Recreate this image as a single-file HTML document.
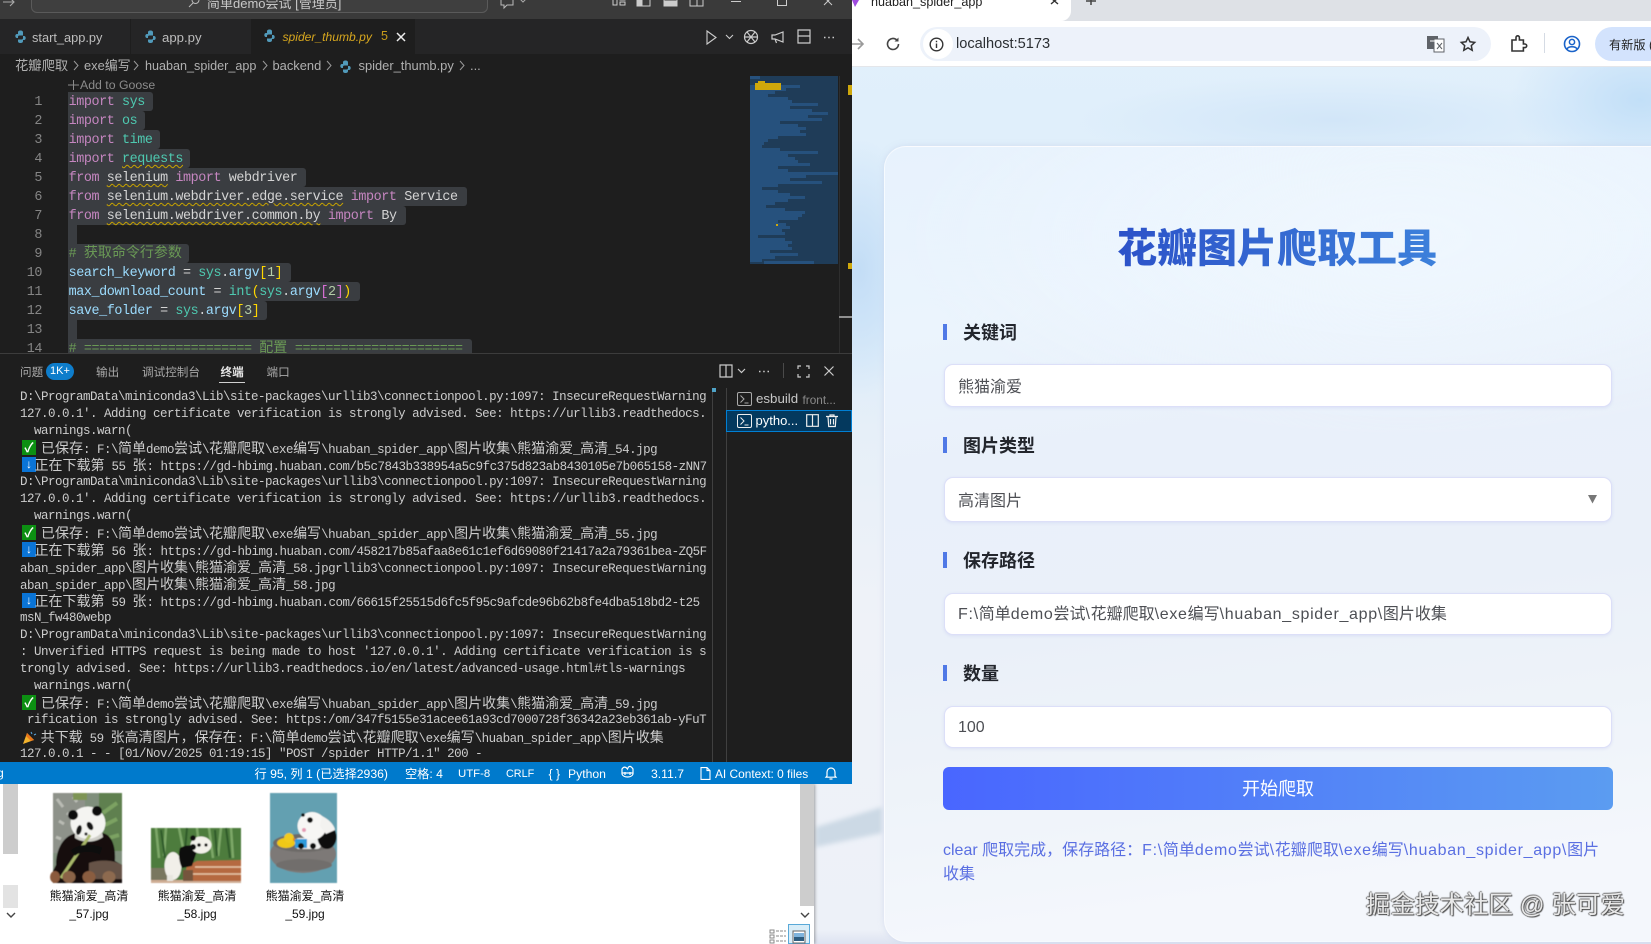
<!DOCTYPE html>
<html lang="zh"><head><meta charset="utf-8"><title>huaban_spider_app</title>
<style>
html,body{margin:0;padding:0;width:1651px;height:944px;overflow:hidden;background:#dce9f5}
*{box-sizing:border-box}
body{position:relative;font-family:"Liberation Sans","Noto Sans CJK SC",sans-serif}
.a{position:absolute}
.t{position:absolute;white-space:pre}
svg{position:absolute;overflow:visible}
/* page */
#page{left:814px;top:0;width:837px;height:944px;overflow:hidden;
background:
radial-gradient(60px 130px at 46px 270px,#c3ddf6 0,rgba(195,221,246,0) 100%),
radial-gradient(130px 80px at 826px 100px,#c2dff8 0,rgba(194,223,248,0) 100%),
radial-gradient(260px 45px at 520px 120px,#d2e6f8 0,rgba(210,230,248,0) 100%),
linear-gradient(180deg,#e2f0fb 0,#e0effb 120px,#dcedfb 320px,#e6eff8 430px,#eff2f8 620px,#edf1f8 930px,#dde3f1 944px)}
#card{left:884px;top:146px;width:780px;height:796px;border-radius:22px 0 0 22px;border:1px solid rgba(255,255,255,.55);
background:
radial-gradient(500px 200px at 520px 90px,#eff7fe 0,rgba(239,247,254,0) 100%),
linear-gradient(172deg,#e7f2fd 0,#ebf4fd 180px,#e9f0fa 330px,#eaf0f9 500px,#eef3f9 640px,#f4f7fc 796px);
box-shadow:0 0 6px rgba(195,205,232,.55)}
#title{left:1077px;top:223px;width:400px;text-align:center;font-size:40px;line-height:52px;font-weight:900;
background:linear-gradient(90deg,#2a4cc6,#3f86dd);-webkit-background-clip:text;background-clip:text;color:transparent}
.bar{position:absolute;left:943px;width:4px;height:16px;background:#5079e6}
.lab{position:absolute;left:963px;font-size:18px;line-height:24px;font-weight:700;color:#23262d;margin-top:.5px}
.inp{position:absolute;left:944px;width:668px;background:#fff;border-radius:9px;border:1px solid #dcdff8;box-shadow:0 1px 3px rgba(120,130,220,.15)}
.val{position:absolute;left:958px;font-size:16px;line-height:24px;color:#4d4f54;white-space:pre;margin-top:1px}
.val b,.st b{font-weight:400;letter-spacing:.68px}
#btn{left:943px;top:767px;width:670px;height:43px;border-radius:6px;background:linear-gradient(90deg,#4966ff,#5b9cf1);color:#fff;font-size:18px;line-height:45px;text-align:center}
.st{position:absolute;left:943px;font-size:16px;line-height:24px;color:#5a6fe2;white-space:pre}
#wm{left:1366px;top:890px;font-size:24.5px;line-height:32px;color:#e8e8e8;white-space:pre;
text-shadow:1px 1px 1px #444,-1px 0 1px #666,0 -1px 1px #777}
/* browser */
#strip{left:852px;top:0;width:799px;height:21px;background:#dee1e6}
#btab{left:852px;top:0;width:219px;height:21px;background:#fff;border-radius:0 0 10px 0}
#tb{left:852px;top:21px;width:799px;height:46px;background:#fff;border-bottom:1px solid #e4e6ea}
#omni{left:920px;top:27px;width:571px;height:34px;border-radius:17px;background:#edf2fa}
/* vscode */
#vs{left:0;top:0;width:852px;height:784px;background:#1e1e1e;overflow:hidden}
#tbar{left:0;top:0;width:852px;height:19px;background:#3a3a3a}
#tabs{left:0;top:19px;width:852px;height:35px;background:#252526}
.ui{font-size:13.2px;line-height:18px;color:#bdbdbd}
.bc{position:absolute;white-space:pre;top:57px;font-size:12.9px;line-height:18px;color:#b0b0b0}
.ed{position:absolute;left:68.6px;height:19px;line-height:19px;margin-top:1px;font-family:"Liberation Mono","Noto Sans CJK SC",monospace;font-size:13.4px;letter-spacing:-.41px;white-space:pre;color:#d4d4d4}
.ed i{font-style:normal;font-size:14px;letter-spacing:0}
.sel{position:absolute;left:68px;height:19px;background:#3a3d41;border-radius:0 3px 3px 0}
.n{position:absolute;left:14px;width:28px;text-align:right;height:19px;line-height:19px;margin-top:1px;font-family:"Liberation Mono",monospace;font-size:13.4px;letter-spacing:-.41px;color:#858585}
.k{color:#c586c0}.g{color:#4ec9b0}.b{color:#9cdcfe}.y{color:#ffd700}.p{color:#da70d6}.m{color:#b5cea8}.c{color:#6a9955}
.w{text-decoration:underline wavy #c9a400 1px;text-underline-offset:2px}
.l{position:absolute;left:20px;height:17px;line-height:17px;margin-top:1px;font-family:"Liberation Mono","Noto Sans CJK SC",monospace;font-size:12.5px;letter-spacing:-.5px;color:#cccccc;white-space:pre}
.l i{font-style:normal;font-size:14px;letter-spacing:0;font-family:"Noto Sans CJK SC",sans-serif}
.ok{position:absolute;left:22px;width:14px;height:15px;background:#0c8f12;color:#fff;font-size:13px;line-height:15px;text-align:center;font-weight:700}
.dn{position:absolute;left:22px;width:14px;height:15px;background:#0a74d6;color:#fff;font-size:12px;line-height:15px;text-align:center;font-weight:700}
.pt{position:absolute;font-size:11.6px;line-height:16px;color:#a9a9a9;white-space:pre}
.s{position:absolute;top:764.5px;font-size:12.2px;line-height:18px;color:#fff;white-space:pre}
.fl{position:absolute;font-size:12px;line-height:18px;color:#111;white-space:pre;text-align:center;width:100px}
</style></head><body>

<!-- browser page -->
<div class="a" id="page"></div>
<svg style="left:814px;top:790px" width="72" height="70"><defs><filter id="st"><feGaussianBlur stdDeviation="2.5"/></filter></defs><path d="M2 37L68 17V43L2 57z" fill="#ccd9e5" filter="url(#st)"/></svg>
<div class="a" id="card"></div>
<div class="a" id="title">花瓣图片爬取工具</div>

<div class="bar" style="top:324px"></div><div class="lab" style="top:320px">关键词</div>
<div class="inp" style="top:364px;height:43px"></div><div class="val" style="top:375px">熊猫渝爱</div>

<div class="bar" style="top:437px"></div><div class="lab" style="top:433px">图片类型</div>
<div class="inp" style="top:477px;height:45px"></div><div class="val" style="top:489px">高清图片</div>
<svg style="left:1588px;top:495px" width="10" height="9"><path d="M0 0h9L4.500 8.500z" fill="#777"/></svg>

<div class="bar" style="top:552px"></div><div class="lab" style="top:548px">保存路径</div>
<div class="inp" style="top:593px;height:42px"></div><div class="val" style="top:602px"><b>F:\</b>简单<b>demo</b>尝试<b>\</b>花瓣爬取<b>\exe</b>编写<b>\huaban_spider_app\</b>图片收集</div>

<div class="bar" style="top:665px"></div><div class="lab" style="top:661px">数量</div>
<div class="inp" style="top:706px;height:42px"></div><div class="val" style="top:715px">100</div>

<div class="a" id="btn">开始爬取</div>
<div class="st" style="top:839px">clear 爬取完成，保存路径：<b>F:\</b>简单<b>demo</b>尝试<b>\</b>花瓣爬取<b>\exe</b>编写<b>\huaban_spider_app\</b>图片</div>
<div class="st" style="top:863px">收集</div>
<div class="a" id="wm">掘金技术社区 @ 张可爱</div>

<!-- browser chrome -->
<div class="a" id="strip"></div>
<div class="a" id="btab"></div>
<div class="t" style="left:871px;top:-7px;font-size:12.6px;line-height:18px;color:#222">huaban_spider_app</div>
<svg style="left:852px;top:0" width="8" height="8"><path d="M0 0h7L3 7z" fill="#a04be0"/></svg>
<svg style="left:1050px;top:-2px" width="10" height="8"><path d="M1 0l7 6M8 0L1 6" stroke="#333" stroke-width="1.400" fill="none"/></svg>
<svg style="left:1085px;top:-2px" width="12" height="10"><path d="M6 0v7M1 3h10" stroke="#444" stroke-width="1.500"/></svg>
<div class="a" id="tb"></div>
<div class="a" id="omni"></div>
<div class="a" style="left:923px;top:29px;width:30px;height:30px;border-radius:15px;background:#fff"></div>
<svg style="left:850px;top:36px" width="16" height="16"><path d="M2 8h11M8 3l5 5-5 5" stroke="#9a9a9a" stroke-width="1.600" fill="none"/></svg>
<svg style="left:885px;top:36px" width="16" height="16"><path d="M13.500 8A5.500 5.500 0 1 1 11.800 4" stroke="#444" stroke-width="1.600" fill="none"/><path d="M13.500 1.500v4h-4z" fill="#444"/></svg>
<svg style="left:929px;top:37px" width="15" height="15"><circle cx="7.500" cy="7.500" r="6.300" stroke="#333" stroke-width="1.400" fill="none"/><path d="M7.500 6.500v4.500M7.500 3.800v1.400" stroke="#333" stroke-width="1.400"/></svg>
<div class="t" style="left:956px;top:35px;font-size:14.600px;line-height:18px;color:#2b2f33">localhost:5173</div>
<svg style="left:1427px;top:35px" width="18" height="18"><rect x="0" y="1" width="11" height="13" fill="#5f6368"/><rect x="7" y="4" width="10" height="13" fill="#fff" stroke="#5f6368"/><path d="M3 6h5" stroke="#fff"/><path d="M10 8l5 6M15 8l-5 6" stroke="#5f6368"/></svg>
<svg style="left:1460px;top:36px" width="16" height="16"><path d="M8 1.500l2 4.300 4.700.6-3.400 3.200.9 4.700L8 11.900l-4.200 2.400.9-4.700L1.300 6.400 6 5.800z" stroke="#333" stroke-width="1.500" fill="none"/></svg>
<svg style="left:1510px;top:35px" width="17" height="18"><path d="M2 5h4V2.500a1.700 1.700 0 0 1 3.400 0V5h4v4h1.500a1.800 1.800 0 0 1 0 3.600H13.400V16H2z" stroke="#333" stroke-width="1.600" fill="none"/></svg>
<div class="a" style="left:1544px;top:33px;width:1px;height:20px;background:#d5dbe4"></div>
<svg style="left:1563px;top:35px" width="18" height="18"><circle cx="9" cy="9" r="7.500" stroke="#1a63c9" stroke-width="1.600" fill="none"/><circle cx="9" cy="7" r="2.600" stroke="#1a63c9" stroke-width="1.500" fill="none"/><path d="M4 14c1.500-3 8.500-3 10 0" stroke="#1a63c9" stroke-width="1.500" fill="none"/></svg>
<div class="a" style="left:1595px;top:27px;width:80px;height:34px;border-radius:17px;background:#d3e3fd"></div>
<div class="t" style="left:1609px;top:36px;font-size:12.200px;line-height:18px;color:#222">有新版 (</div>

<!-- explorer -->
<div class="a" style="left:0;top:784px;width:814px;height:160px;background:#fff;box-shadow:1px 0 3px rgba(90,90,90,.55)"></div>
<div class="a" style="left:3px;top:784px;width:15px;height:70px;background:#cdcdcd"></div>
<div class="a" style="left:3px;top:885px;width:15px;height:23px;background:#e3e3e3"></div>
<svg style="left:6px;top:912px" width="10" height="7"><path d="M1 1l4 4 4-4" stroke="#444" stroke-width="1.400" fill="none"/></svg>
<div class="a" style="left:800px;top:784px;width:13.500px;height:122px;background:#cdcdcd"></div>
<svg style="left:800px;top:912px" width="10" height="7"><path d="M1 1l4 4 4-4" stroke="#444" stroke-width="1.400" fill="none"/></svg>

<svg style="left:53px;top:793px" width="69" height="90" viewBox="0 0 69 90">
<defs><filter id="bl"><feGaussianBlur stdDeviation=".5"/></filter></defs>
<g filter="url(#bl)"><rect width="69" height="90" fill="#7f8f7c"/><rect width="32" height="60" fill="#8e928a"/><path d="M4 6l6 8M14 20l5 4M6 28l5 3M20 4l4 5M3 44l5 2" stroke="#b9bbb4" stroke-width="3"/><rect x="46" width="23" height="58" fill="#5f8050"/><path d="M50 20l14-10M52 32l12-6M56 45l10-3" stroke="#7ba262" stroke-width="4"/><rect x="20" width="14" height="7" fill="#7d9455"/>
<path d="M3 72C3 52 14 40 26 40h22c10 0 15 12 14 28l7 4v18H0V78z" fill="#14110e"/>
<path d="M36 70c8-3 24-4 33 2v14H36z" fill="#665347"/>
<ellipse cx="35" cy="30" rx="17.500" ry="16.500" fill="#f4f4f1"/><path d="M22 40c6 8 20 8 27-1l1 5c-8 6-20 6-28 1z" fill="#cfcfc9"/>
<circle cx="20" cy="22" r="5" fill="#0f0f0f"/><circle cx="44" cy="18" r="5" fill="#0f0f0f"/><ellipse cx="26" cy="37" rx="2.600" ry="5" fill="#161616" transform="rotate(15 26 37)"/><ellipse cx="37" cy="33" rx="2.800" ry="4.500" fill="#161616" transform="rotate(-30 37 33)"/><circle cx="33" cy="41" r="1.600" fill="#333"/>
<path d="M8 85L37 42" stroke="#a9b86a" stroke-width="3"/><path d="M20 60c8-6 18-6 28-2" stroke="#0a0a0a" stroke-width="7" fill="none"/>
<ellipse cx="2" cy="84" rx="5" ry="6" fill="#8b5a3e"/><ellipse cx="16" cy="84" rx="6.500" ry="6" fill="#8a6347"/><ellipse cx="36" cy="84" rx="6.500" ry="6" fill="#8a5d40"/><ellipse cx="56" cy="84" rx="6.500" ry="6" fill="#8d6a4f"/></g></svg>

<svg style="left:151px;top:828px" width="90" height="55" viewBox="0 0 90 55">
<g filter="url(#bl)"><rect width="90" height="55" fill="#4d7c3e"/><path d="M5 0l3 30M15 0l-2 28M28 0l4 20M58 0l4 30M70 0l-3 28M80 0l2 30M46 0l2 18" stroke="#7da867" stroke-width="2.500"/><path d="M10 2l4 28M36 0l-2 22M64 2l2 26M75 0l4 30" stroke="#2f5a2b" stroke-width="2"/>
<rect x="0" y="40" width="20" height="13" fill="#79775f"/><rect x="0" y="52" width="90" height="3" fill="#cfae95"/>
<path d="M36 38l10-5 44-1v21H32z" fill="#b5693f"/><path d="M44 39h46M42 46h48" stroke="#e6c6a8" stroke-width="1.500"/><rect x="32" y="42" width="10" height="11" fill="#74543e"/>
<ellipse cx="22" cy="38" rx="8.500" ry="14" fill="#f1efe9"/><path d="M29 20c6-4 14-3 18 0l-6 18-10 2c-3-6-4-14-2-20z" fill="#0f0f0f"/><rect x="16" y="47" width="6" height="6" fill="#e8e6df"/>
<ellipse cx="50" cy="17" rx="10.500" ry="8.500" fill="#f3f1ea"/><circle cx="42" cy="19" r="3" fill="#0f0f0f"/><circle cx="42" cy="10" r="2.800" fill="#111"/><circle cx="48" cy="17" r="1.800" fill="#111"/><circle cx="55" cy="17" r="1.600" fill="#111"/></g></svg>

<svg style="left:270px;top:793px" width="67" height="90" viewBox="0 0 67 90">
<g filter="url(#bl)"><rect width="67" height="90" fill="#64a0b1"/>
<ellipse cx="33" cy="61" rx="33" ry="19" fill="#7d7977"/><ellipse cx="33" cy="50" rx="30" ry="9" fill="#6d6a68"/><ellipse cx="34" cy="72" rx="28" ry="6" fill="#716e6c" />
<rect x="25" y="45" width="26" height="11" rx="4" fill="#f0f0ee"/><path d="M25 46h12v9H25z" fill="#2f9bdc"/>
<ellipse cx="57" cy="44" rx="9.500" ry="12" fill="#0c0c0c"/>
<ellipse cx="42" cy="33" rx="14.500" ry="14" fill="#f7f6f4"/><path d="M52 23c6 3 12 8 13 14l-9 4-6-8z" fill="#f3f2f0"/>
<circle cx="40" cy="27" r="2.800" fill="#111"/><circle cx="33" cy="22" r="1.800" fill="#111"/><circle cx="34" cy="37" r="2" fill="#e69ab4"/>
<circle cx="31" cy="53" r="3" fill="#111"/><circle cx="43" cy="53" r="3" fill="#111"/>
<ellipse cx="16" cy="50" rx="9" ry="5" fill="#f0c818"/><circle cx="19" cy="45" r="5" fill="#f2cb1d"/><path d="M23 45l3 1-3 2z" fill="#e88a1a"/></g></svg>

<div class="fl" style="left:39px;top:887px">熊猫渝爱_高清</div><div class="fl" style="left:39px;top:905px">_57.jpg</div>
<div class="fl" style="left:147px;top:887px">熊猫渝爱_高清</div><div class="fl" style="left:147px;top:905px">_58.jpg</div>
<div class="fl" style="left:255px;top:887px">熊猫渝爱_高清</div><div class="fl" style="left:255px;top:905px">_59.jpg</div>
<svg style="left:769px;top:928px" width="18" height="16"><path d="M1 2h4v3H1zM1 7h4v3H1zM1 12h4v3H1z" fill="none" stroke="#8a8a8a"/><path d="M7 3h10M7 8h10M7 13h10" stroke="#8a8a8a" stroke-dasharray="3 1"/></svg>
<div class="a" style="left:788px;top:924px;width:22px;height:20px;background:#d9edf8;border:1px solid #59a9d8"></div>
<svg style="left:793px;top:931px" width="12" height="12"><rect width="12" height="12" fill="#fff" stroke="#666"/><rect x="1" y="2" width="10" height="4" fill="#7fb4dd"/><rect x="1" y="6" width="10" height="4" fill="#2d5c7f"/></svg>

<!-- VS Code -->
<div class="a" id="vs">
<div class="a" id="tbar"></div>
<svg style="left:3px;top:-2px" width="12" height="9"><path d="M0 4h11M7 0l4 4-4 4" stroke="#aaa" stroke-width="1.100" fill="none"/></svg>
<div class="a" style="left:31px;top:-8px;width:457px;height:21px;border:1px solid #5a5a5a;border-radius:6px;background:#3f3f3f"></div>
<svg style="left:188px;top:-3px" width="12" height="12"><circle cx="7.500" cy="3" r="3.500" stroke="#bbb" fill="none"/><path d="M5 6l-4 4" stroke="#bbb"/></svg>
<div class="t" style="left:207px;top:-5px;font-size:13px;line-height:18px;color:#c8c8c8">简单demo尝试 [管理员]</div>
<svg style="left:499px;top:-3px" width="30" height="12"><path d="M2 1h12v7H8l-3 3V8H2z" stroke="#bbb" fill="none"/><path d="M20 1l4 4 4-4" stroke="#aaa" fill="none"/></svg>
<svg style="left:612px;top:-3px" width="100" height="12" fill="none" stroke="#ccc"><path d="M1 0v8h4V0M8 0h5v3H8zM8 5h5v3H8z"/><path d="M25 0h13v9H25z"/><path d="M25 0h5v9h-5z" fill="#ccc"/><path d="M52 0h13v9H52z"/><path d="M52 4h13v5H52z" fill="#ccc"/><path d="M78 0h13v9H78zM85 0v9"/></svg>
<div class="a" style="left:731px;top:1px;width:10px;height:1px;background:#ccc"></div>
<div class="a" style="left:777px;top:-3px;width:10px;height:9px;border:1px solid #ccc"></div>
<svg style="left:823px;top:-3px" width="11" height="9"><path d="M1 0l8 8M9 0L1 8" stroke="#ccc" fill="none"/></svg>

<div class="a" id="tabs"></div>
<div class="a" style="left:130px;top:19px;width:1px;height:35px;background:#1e1e1e"></div>
<div class="a" style="left:251px;top:19px;width:164px;height:35px;background:#1e1e1e"></div>
<svg style="left:15px;top:30px" width="11" height="13"><path d="M3 4V2.500C3 1 4 .5 5.500.5S8 1 8 2.500V5.500H4.500C3.500 5.500 3 6 3 7v1H2C.8 8 .3 7 .3 6s.5-2 1.700-2zM8 6h1c1.200 0 1.700 1 1.700 2s-.5 2-1.700 2H8v1c0 1.500-1 2-2.500 2S3 12.500 3 11V9.500h3.500c1 0 1.500-.5 1.500-1.500z" fill="#519aba"/></svg>
<svg style="left:145px;top:30px" width="11" height="13"><path d="M3 4V2.500C3 1 4 .5 5.500.5S8 1 8 2.500V5.500H4.500C3.500 5.500 3 6 3 7v1H2C.8 8 .3 7 .3 6s.5-2 1.700-2zM8 6h1c1.200 0 1.700 1 1.700 2s-.5 2-1.700 2H8v1c0 1.500-1 2-2.500 2S3 12.500 3 11V9.500h3.500c1 0 1.500-.5 1.500-1.500z" fill="#519aba"/></svg>
<svg style="left:264px;top:29px" width="11" height="13"><path d="M3 4V2.500C3 1 4 .5 5.500.5S8 1 8 2.500V5.500H4.500C3.500 5.500 3 6 3 7v1H2C.8 8 .3 7 .3 6s.5-2 1.700-2zM8 6h1c1.200 0 1.700 1 1.700 2s-.5 2-1.700 2H8v1c0 1.500-1 2-2.500 2S3 12.500 3 11V9.500h3.500c1 0 1.500-.5 1.500-1.500z" fill="#519aba"/></svg>
<div class="t ui" style="left:32px;top:28.500px;font-size:12.800px">start_app.py</div>
<div class="t ui" style="left:162px;top:28.500px">app.py</div>
<div class="t ui" style="left:282.500px;top:28px;color:#d7a71e;font-style:italic;font-size:12.100px">spider_thumb.py</div>
<div class="t" style="left:381px;top:27px;font-size:12.500px;line-height:18px;color:#c79a1a">5</div>
<svg style="left:396px;top:32px" width="10" height="10"><path d="M1 1l8 8M9 1L1 9" stroke="#eee" stroke-width="1.500"/></svg>
<svg style="left:706px;top:30px" width="28" height="15" fill="none" stroke="#ccc" stroke-width="1.100"><path d="M1 1l9 6.500L1 14z"/><path d="M20 5l3.500 3.500L27 5"/></svg>
<svg style="left:743px;top:29px" width="16" height="16" fill="none" stroke="#ccc" stroke-width="1.200"><circle cx="8" cy="8" r="6.500"/><path d="M4 3l8 10M12 3L4 13M1.500 8h13"/></svg>
<svg style="left:770px;top:31px" width="15" height="13" fill="none" stroke="#ccc" stroke-width="1.200"><path d="M13 1v10L5 8H2V4h3zM5 8l1.500 4"/></svg>
<svg style="left:797px;top:29px" width="14" height="15" fill="none" stroke="#ccc" stroke-width="1.200"><path d="M1 1h12v13H1zM1 7h12"/></svg>
<svg style="left:823px;top:36px" width="12" height="3"><path d="M1 1.500h1.500M5.200 1.500h1.500M9.500 1.500H11" stroke="#ccc" stroke-width="1.500"/></svg>

<!-- breadcrumb -->
<div class="bc" style="left:15px;font-size:13.300px">花瓣爬取</div>
<div class="bc" style="left:84px">exe编写</div>
<div class="bc" style="left:145px;font-size:12.600px">huaban_spider_app</div>
<div class="bc" style="left:272.500px">backend</div>
<svg style="left:340px;top:60px" width="11" height="13"><path d="M3 4V2.500C3 1 4 .5 5.500.5S8 1 8 2.500V5.500H4.500C3.500 5.500 3 6 3 7v1H2C.8 8 .3 7 .3 6s.5-2 1.700-2zM8 6h1c1.200 0 1.700 1 1.700 2s-.5 2-1.700 2H8v1c0 1.500-1 2-2.500 2S3 12.500 3 11V9.500h3.500c1 0 1.500-.5 1.500-1.500z" fill="#519aba"/></svg>
<div class="bc" style="left:358.500px">spider_thumb.py</div>
<div class="bc" style="left:470px">...</div>
<svg style="left:74px;top:60px" width="400" height="12" fill="none" stroke="#999"><path d="M0 1l4 4.500L0 10M60 1l4 4.500L60 10M189 1l4 4.500-4 4.500M253 1l4 4.500-4 4.500M386 1l4 4.500-4 4.500"/></svg>

<!-- editor -->
<svg style="left:68px;top:79px" width="12" height="12"><path d="M5.500 1v10M0 6h11" stroke="#8a8a8a"/></svg>
<div class="t" style="left:80px;top:76px;font-size:12.300px;line-height:18px;color:#8c8c8c">Add to Goose</div>

<div class="sel" style="top:92px;width:84.500px"></div>
<div class="sel" style="top:111px;width:77px"></div>
<div class="sel" style="top:130px;width:92px"></div>
<div class="sel" style="top:149px;width:122px"></div>
<div class="sel" style="top:168px;width:238px"></div>
<div class="sel" style="top:187px;width:399px"></div>
<div class="sel" style="top:206px;width:338px"></div>
<div class="sel" style="top:225px;width:9px;border-radius:0"></div>
<div class="sel" style="top:244px;width:121px"></div>
<div class="sel" style="top:263px;width:223px"></div>
<div class="sel" style="top:282px;width:292px"></div>
<div class="sel" style="top:301px;width:199px"></div>
<div class="sel" style="top:320px;width:9px;border-radius:0"></div>
<div class="sel" style="top:339px;width:404px"></div>

<div class="n" style="top:92px">1</div><div class="n" style="top:111px">2</div><div class="n" style="top:130px">3</div><div class="n" style="top:149px">4</div><div class="n" style="top:168px">5</div><div class="n" style="top:187px">6</div><div class="n" style="top:206px">7</div><div class="n" style="top:225px">8</div><div class="n" style="top:244px">9</div><div class="n" style="top:263px">10</div><div class="n" style="top:282px">11</div><div class="n" style="top:301px">12</div><div class="n" style="top:320px">13</div><div class="n" style="top:339px">14</div>

<div class="ed" style="top:92px"><span class="k">import</span> <span class="g">sys</span></div>
<div class="ed" style="top:111px"><span class="k">import</span> <span class="g">os</span></div>
<div class="ed" style="top:130px"><span class="k">import</span> <span class="g">time</span></div>
<div class="ed" style="top:149px"><span class="k">import</span> <span class="g w">requests</span></div>
<div class="ed" style="top:168px"><span class="k">from</span> <span class="w">selenium</span> <span class="k">import</span> webdriver</div>
<div class="ed" style="top:187px"><span class="k">from</span> <span class="w">selenium.webdriver.edge.service</span> <span class="k">import</span> Service</div>
<div class="ed" style="top:206px"><span class="k">from</span> <span class="w">selenium.webdriver.common.by</span> <span class="k">import</span> By</div>
<div class="ed c" style="top:244px"># <i>获取命令行参数</i></div>
<div class="ed" style="top:263px"><span class="b">search_keyword</span> = <span class="g">sys</span>.<span class="b">argv</span><span class="y">[</span><span class="m">1</span><span class="y">]</span></div>
<div class="ed" style="top:282px"><span class="b">max_download_count</span> = <span class="g">int</span><span class="y">(</span><span class="g">sys</span>.<span class="b">argv</span><span class="p">[</span><span class="m">2</span><span class="p">]</span><span class="y">)</span></div>
<div class="ed" style="top:301px"><span class="b">save_folder</span> = <span class="g">sys</span>.<span class="b">argv</span><span class="y">[</span><span class="m">3</span><span class="y">]</span></div>
<div class="ed c" style="top:339px"># ====================== <i>配置</i> ======================</div>

<!-- minimap -->
<svg style="left:750px;top:76px" width="88" height="188" viewBox="0 0 88 188">
<rect width="88" height="188" fill="#1f3c58"/>
<path d="M0 1.500h10M0 10.500h50M0 13.500h36M0 16.500h25M0 19.500h18M0 22.500h38M0 25.500h42M0 28.500h68M0 31.500h40M0 34.500h62M0 37.500h78M0 40.500h58M0 43.500h72M0 46.500h30M0 49.500h48M0 52.500h56M0 55.500h50M0 58.500h56M0 61.500h28M0 64.500h18M0 67.500h14M0 70.500h12M0 73.500h30M0 76.500h68M0 79.500h38M0 82.500h45M0 85.500h48M0 88.500h60M0 91.500h28M0 94.500h38M0 97.500h88M0 100.500h56M0 103.500h40M0 106.500h72M0 109.500h28M0 112.500h12M0 115.500h28M0 118.500h40M0 121.500h55M0 124.500h38M0 127.500h25M0 130.500h16M0 133.500h35M0 136.500h55M0 139.500h52M0 142.500h48M0 145.500h28M0 148.500h36M0 151.500h40M0 154.500h32M0 157.500h35M0 160.500h8M0 163.500h35M0 166.500h42M0 169.500h38M0 172.500h42M0 175.500h20M0 178.500h48M0 181.500h25M0 184.500h12M14 186.500h50" stroke="#285584" stroke-width="3" opacity=".85"/>
<rect x="5" y="7" width="26" height="7" fill="#cfa80b"/><rect x="8" y="5" width="7" height="3" fill="#cfa80b"/><rect x="26" y="148" width="2" height="2" fill="#cfa80b"/>
</svg>
<div class="a" style="left:839px;top:76px;width:1px;height:277px;background:#2e2e2e"></div>
<div class="a" style="left:848px;top:85px;width:4px;height:10px;background:#cfa80b"></div>
<div class="a" style="left:848px;top:263px;width:4px;height:6px;background:#cfa80b"></div>
<div class="a" style="left:839px;top:316px;width:13px;height:2px;background:#8f8f8f"></div>

<!-- panel -->
<div class="a" style="left:0;top:353px;width:852px;height:409px;background:#1e1e1e;border-top:1px solid #3c3c3c"></div>
<div class="pt" style="left:20px;top:365px">问题</div>
<div class="a" style="left:46px;top:363px;width:28px;height:17px;border-radius:9px;background:#0e7dcb;color:#fff;font-size:11px;line-height:17px;text-align:center">1K+</div>
<div class="pt" style="left:96px;top:365px">输出</div>
<div class="pt" style="left:142px;top:365px">调试控制台</div>
<div class="pt" style="left:220.500px;top:365px;color:#e6e6e6;font-weight:700">终端</div>
<div class="a" style="left:219px;top:381.500px;width:26px;height:1.500px;background:#d0d0d0"></div>
<div class="pt" style="left:266.500px;top:365px">端口</div>
<svg style="left:719px;top:364px" width="30" height="14" fill="none" stroke="#ccc" stroke-width="1.200"><path d="M1 1h12v12H1zM7 1v12"/><path d="M19 5l3.500 3.500L26 5"/></svg>
<svg style="left:758px;top:370px" width="12" height="3"><path d="M1 1.500h1.500M5.200 1.500h1.500M9.500 1.500H11" stroke="#ccc" stroke-width="1.500"/></svg>
<div class="a" style="left:783px;top:363px;width:1px;height:15px;background:#4a4a4a"></div>
<svg style="left:797px;top:365px" width="13" height="13" fill="none" stroke="#ccc" stroke-width="1.200"><path d="M1 4V1h3M9 1h3v3M12 9v3H9M4 12H1V9"/></svg>
<svg style="left:824px;top:366px" width="10" height="10"><path d="M.5.500l9 9M9.500.500l-9 9" stroke="#ccc" stroke-width="1.200"/></svg>

<div class="l" style="top:388.200px">D:\ProgramData\miniconda3\Lib\site-packages\urllib3\connectionpool.py:1097: InsecureRequestWarning</div>
<div class="l" style="top:405.200px">127.0.0.1'. Adding certificate verification is strongly advised. See: https://urllib3.readthedocs.</div>
<div class="l" style="top:422.200px">  warnings.warn(</div>
<div class="ok" style="top:440px">✓</div>
<div class="l" style="top:439.200px;left:41px"><i>已保存</i>: F:\<i>简单</i>demo<i>尝试</i>\<i>花瓣爬取</i>\exe<i>编写</i>\huaban_spider_app\<i>图片收集</i>\<i>熊猫渝爱</i>_<i>高清</i>_54.jpg</div>
<div class="dn" style="top:457px">↓</div>
<div class="l" style="top:456.200px;left:34.500px"><i>正在下载第</i> 55 <i>张</i>: https://gd-hbimg.huaban.com/b5c7843b338954a5c9fc375d823ab8430105e7b065158-zNN7</div>
<div class="l" style="top:473.200px">D:\ProgramData\miniconda3\Lib\site-packages\urllib3\connectionpool.py:1097: InsecureRequestWarning</div>
<div class="l" style="top:490.200px">127.0.0.1'. Adding certificate verification is strongly advised. See: https://urllib3.readthedocs.</div>
<div class="l" style="top:507.200px">  warnings.warn(</div>
<div class="ok" style="top:525px">✓</div>
<div class="l" style="top:524.200px;left:41px"><i>已保存</i>: F:\<i>简单</i>demo<i>尝试</i>\<i>花瓣爬取</i>\exe<i>编写</i>\huaban_spider_app\<i>图片收集</i>\<i>熊猫渝爱</i>_<i>高清</i>_55.jpg</div>
<div class="dn" style="top:542px">↓</div>
<div class="l" style="top:541.200px;left:34.500px"><i>正在下载第</i> 56 <i>张</i>: https://gd-hbimg.huaban.com/458217b85afaa8e61c1ef6d69080f21417a2a79361bea-ZQ5F</div>
<div class="l" style="top:558.200px">aban_spider_app\<i>图片收集</i>\<i>熊猫渝爱</i>_<i>高清</i>_58.jpgrllib3\connectionpool.py:1097: InsecureRequestWarning</div>
<div class="l" style="top:575.200px">aban_spider_app\<i>图片收集</i>\<i>熊猫渝爱</i>_<i>高清</i>_58.jpg</div>
<div class="dn" style="top:593px">↓</div>
<div class="l" style="top:592.200px;left:34.500px"><i>正在下载第</i> 59 <i>张</i>: https://gd-hbimg.huaban.com/66615f25515d6fc5f95c9afcde96b62b8fe4dba518bd2-t25</div>
<div class="l" style="top:609.200px">msN_fw480webp</div>
<div class="l" style="top:626.200px">D:\ProgramData\miniconda3\Lib\site-packages\urllib3\connectionpool.py:1097: InsecureRequestWarning</div>
<div class="l" style="top:643.200px">: Unverified HTTPS request is being made to host '127.0.0.1'. Adding certificate verification is s</div>
<div class="l" style="top:660.200px">trongly advised. See: https://urllib3.readthedocs.io/en/latest/advanced-usage.html#tls-warnings</div>
<div class="l" style="top:677.200px">  warnings.warn(</div>
<div class="ok" style="top:695px">✓</div>
<div class="l" style="top:694.200px;left:41px"><i>已保存</i>: F:\<i>简单</i>demo<i>尝试</i>\<i>花瓣爬取</i>\exe<i>编写</i>\huaban_spider_app\<i>图片收集</i>\<i>熊猫渝爱</i>_<i>高清</i>_59.jpg</div>
<div class="l" style="top:711.200px;left:27px">rification is strongly advised. See: https:/om/347f5155e31acee61a93cd7000728f36342a23eb361ab-yFuT</div>
<svg style="left:22px;top:730px" width="15" height="15"><path d="M1 14L5 3l7 7z" fill="#f2b22c"/><path d="M5 3l7 7-3 1-5-5z" fill="#e8751a"/><path d="M9 2l1 2M12 5l2-1" stroke="#5aa7e0"/></svg>
<div class="l" style="top:728.200px;left:40.600px"><i>共下载</i> 59 <i>张高清图片，保存在</i>: F:\<i>简单</i>demo<i>尝试</i>\<i>花瓣爬取</i>\exe<i>编写</i>\huaban_spider_app\<i>图片收集</i></div>
<div class="l" style="top:745.200px">127.0.0.1 - - [01/Nov/2025 01:19:15] "POST /spider HTTP/1.1" 200 -</div>

<div class="a" style="left:712px;top:388px;width:1px;height:374px;background:#404040"></div>
<div class="a" style="left:725.500px;top:388px;width:1px;height:374px;background:#404040"></div>
<div class="a" style="left:712px;top:388px;width:4px;height:4px;background:#4fa3c7"></div>

<svg style="left:737px;top:392px" width="15" height="14" fill="none" stroke="#aaa"><rect x=".5" y=".5" width="14" height="13" rx="1.500"/><path d="M3.500 3.500L7 7l-3.500 3.500M7.500 11h4"/></svg>
<div class="t" style="left:756px;top:390px;font-size:13.300px;line-height:18px;color:#c8c8c8">esbuild</div>
<div class="t" style="left:802.500px;top:391px;font-size:11.800px;line-height:18px;color:#8a8a8a">front...</div>
<div class="a" style="left:726px;top:410px;width:126px;height:22px;background:#04395e;border:1px solid #007fd4"></div>
<svg style="left:737px;top:414px" width="15" height="14" fill="none" stroke="#eee"><rect x=".5" y=".5" width="14" height="13" rx="1.500"/><path d="M3.500 3.500L7 7l-3.500 3.500M7.500 11h4"/></svg>
<div class="t" style="left:755.500px;top:412px;font-size:13px;line-height:18px;color:#fff">pytho...</div>
<svg style="left:806px;top:414px" width="13" height="13" fill="none" stroke="#eee" stroke-width="1.200"><path d="M.7.700h11.600v11.600H.7zM6.500.700v11.600"/></svg>
<svg style="left:826px;top:414px" width="12" height="13" fill="none" stroke="#eee" stroke-width="1.200"><path d="M0 2.500h12M4 2.500V1h4v1.500M2 2.500l.7 10h6.600l.7-10M4.500 5v5.500M7.500 5v5.500"/></svg>

<!-- status bar -->
<div class="a" style="left:0;top:762px;width:852px;height:22px;background:#007acc"></div>
<div class="t" style="left:-3px;top:764px;font-size:12.200px;line-height:18px;color:#fff">g</div>
<div class="s" style="left:254.500px">行 95, 列 1 (已选择2936)</div>
<div class="s" style="left:405px">空格: 4</div>
<div class="s" style="left:458px;font-size:11.400px">UTF-8</div>
<div class="s" style="left:506px;font-size:10.800px">CRLF</div>
<div class="s" style="left:548.500px">{ }</div>
<div class="s" style="left:568px">Python</div>
<svg style="left:620px;top:766px" width="15" height="14" fill="none" stroke="#fff" stroke-width="1.200"><path d="M2 3c2-3 4-2 5.500 0C9-1 11 0 13 3v5c-1 4-10 4-11 0zM5 6v3M10 6v3M2 7h11"/></svg>
<div class="s" style="left:651px">3.11.7</div>
<svg style="left:700px;top:767px" width="11" height="13" fill="none" stroke="#fff" stroke-width="1.100"><path d="M1 .600h6l3 3V12.400H1zM7 .600v3h3"/></svg>
<div class="s" style="left:715px;font-size:11.900px">AI Context: 0 files</div>
<svg style="left:825px;top:766px" width="12" height="14" fill="none" stroke="#fff" stroke-width="1.200"><path d="M2 10V6a4 4 0 0 1 8 0v4l1 1.200H1zM4.500 13h3"/></svg>
</div>
</body></html>
